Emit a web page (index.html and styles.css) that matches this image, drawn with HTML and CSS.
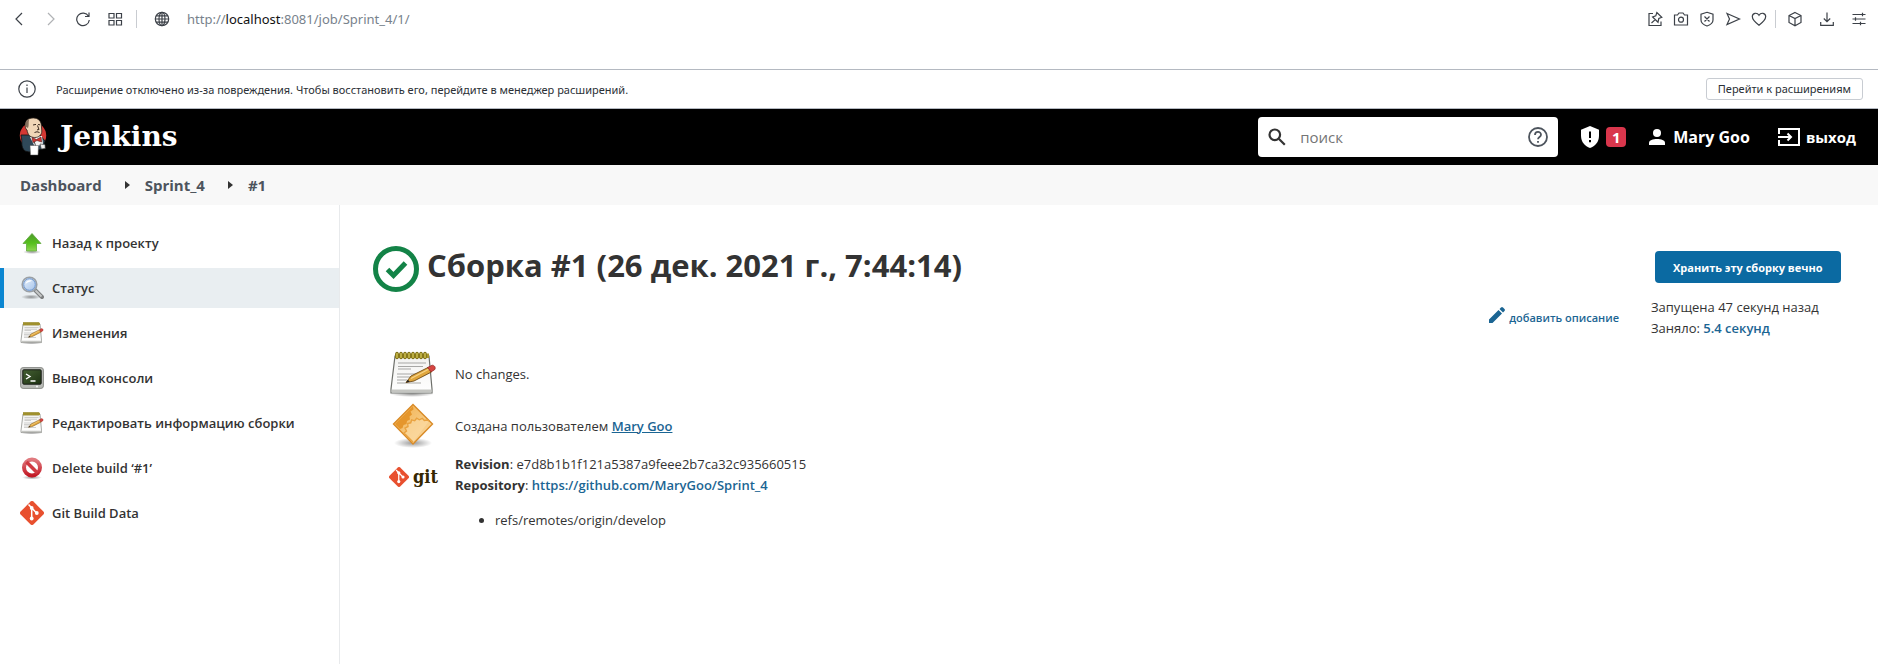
FILE: index.html
```html
<!DOCTYPE html>
<html lang="ru">
<head>
<meta charset="utf-8">
<title>Sprint_4 #1 [Jenkins]</title>
<link rel="stylesheet" href="styles.css">
</head>
<body>
<svg class="defs" width="0" height="0" aria-hidden="true">
  <defs>
    <linearGradient id="gGreen" x1="0" y1="0" x2="0" y2="1"><stop offset="0" stop-color="#4e9a2e"/><stop offset=".55" stop-color="#56c01c"/><stop offset="1" stop-color="#8ed652"/></linearGradient>
    <linearGradient id="gPaper" x1="0" y1="0" x2="0" y2="1"><stop offset="0" stop-color="#f2f2f0"/><stop offset="1" stop-color="#ffffff"/></linearGradient>
    <linearGradient id="gLens" x1="0" y1="0" x2="1" y2="1"><stop offset="0" stop-color="#e8f1fb"/><stop offset="1" stop-color="#a3c2ea"/></linearGradient>
    <linearGradient id="gScreen" x1="0" y1="0" x2="1" y2="1"><stop offset="0" stop-color="#456033"/><stop offset="1" stop-color="#1d3212"/></linearGradient>
    <linearGradient id="gStop" x1="0" y1="0" x2="0" y2="1"><stop offset="0" stop-color="#e07a7f"/><stop offset="1" stop-color="#c31a26"/></linearGradient>
    <linearGradient id="gOrange" x1="0" y1="0" x2="1" y2="1"><stop offset="0" stop-color="#f0ae4a"/><stop offset="1" stop-color="#fbdca6"/></linearGradient>
    <radialGradient id="gShadow"><stop offset="0" stop-color="#000" stop-opacity=".4"/><stop offset="1" stop-color="#000" stop-opacity="0"/></radialGradient>
    <symbol id="notepad" viewBox="0 0 48 48">
      <ellipse cx="23" cy="44" rx="22" ry="3" fill="url(#gShadow)"/>
      <path d="M6 6h34l3 33v4H2v-4z" fill="url(#gPaper)" stroke="#6d6f6a" stroke-width="1.2"/>
      <path d="M2.6 39.5h40v3h-40z" fill="#c4c5c1"/>
      <path d="M6 3.500h34v4.500h-34z" fill="#a9962a"/>
      <path d="M8 3.500v4M12 3.500v4M16 3.500v4M20 3.500v4M24 3.500v4M28 3.500v4M32 3.500v4M36 3.500v4" stroke="#7a6c14" stroke-width="3.400" stroke-linecap="round"/>
      <path d="M8 3.500v4M12 3.500v4M16 3.500v4M20 3.500v4M24 3.500v4M28 3.500v4M32 3.500v4M36 3.500v4" stroke="#d8c956" stroke-width="1.400" stroke-linecap="round"/>
      <path d="M9 13h28M9 16.500h25M9 19h13M8 24h24M8 27h16M8 30h10M8 33h24" stroke="#a7a7a5" stroke-width="1"/>
      <path d="M17 32.500l5-6.500 17-8.500 3.500 4.500L25 31z" fill="#e0a63c" stroke="#6d4a14" stroke-width=".9"/>
      <path d="M22 28.500l18-9.500" stroke="#f5d489" stroke-width="1.300"/>
      <path d="M17 32.500l2-2.700 1.700 2z" fill="#222"/>
      <path d="M38.500 17.500l4.500-2.300c2.500-.3 4.300 2.800 2.500 4.600l-3.500 2.200z" fill="#d64541" stroke="#8e2320" stroke-width=".7"/>
    </symbol>
    <symbol id="gitmark" viewBox="0 0 24 24">
      <path d="M10.600.6a2 2 0 0 1 2.800 0l10 10a2 2 0 0 1 0 2.800l-10 10a2 2 0 0 1-2.800 0l-10-10a2 2 0 0 1 0-2.800z" fill="#e8502f"/>
      <path d="M8.500 3.600l3.200 3.300v10.600M12 7.200l4.800 5" stroke="#fff" stroke-width="1.500" fill="none"/>
      <circle cx="11.700" cy="7" r="1.900" fill="#fff"/><circle cx="11.700" cy="17.500" r="1.900" fill="#fff"/><circle cx="16.800" cy="12" r="1.900" fill="#fff"/>
    </symbol>
  </defs>
</svg>

<div class="browser">
  <button class="tool" aria-label="Назад"><svg class="i16" viewBox="0 0 16 16"><path d="M11 2L5 8l6 6"/></svg></button>
  <button class="tool tool-off" aria-label="Вперёд"><svg class="i16" viewBox="0 0 16 16"><path d="M5 2l6 6-6 6"/></svg></button>
  <button class="tool" aria-label="Обновить"><svg class="i16" viewBox="0 0 16 16"><path d="M13.500 5.200A6.300 6.300 0 1 0 14.300 9M14 1.500v4h-4"/></svg></button>
  <button class="tool" aria-label="Экспресс-панель"><svg class="i16" viewBox="0 0 16 16"><path d="M2 2.500h5v4.500H2zM9.500 2.500h5v4.500h-5zM2 9.500h5V14H2zM9.500 9.500h5V14h-5z"/></svg></button>
  <span class="divider"></span>
  <svg class="i16 globe" viewBox="0 0 16 16"><circle cx="8" cy="8" r="6.700"/><ellipse cx="8" cy="8" rx="3" ry="6.700"/><path d="M8 1.300v13.400M1.300 8h13.400M2.200 4.800h11.600M2.200 11.200h11.600"/></svg>
  <span class="url">http://<b>localhost</b>:8081/job/Sprint_4/1/</span>
  <div class="browser-actions">
    <button class="act" aria-label="Закрепить"><svg class="i16" viewBox="0 0 16 16"><path d="M6 2.500H2v12h12V10.500M9.800 1.500l5 4.700-3 1.300-.8 3.700-5.400-5.200 3.200-1.200zM8.200 8.600L4.500 12"/></svg></button>
    <button class="act" aria-label="Снимок"><svg class="i16" viewBox="0 0 16 16"><path d="M1.500 4h3L6 2h4l1.500 2h3v10h-13z"/><circle cx="8" cy="8.700" r="2.500"/></svg></button>
    <button class="act" aria-label="Блокировка"><svg class="i16" viewBox="0 0 16 16"><path d="M8 1.300l6 2V9c0 3-3 5-6 6-3-1-6-3-6-6V3.300zM5.500 5.500l5 5M10.500 5.500l-5 5"/></svg></button>
    <button class="act" aria-label="Отправить"><svg class="i16" viewBox="0 0 16 16"><path d="M2 2.500L14.500 8 2 13.500 4.500 8z"/></svg></button>
    <button class="act" aria-label="Избранное"><svg class="i16" viewBox="0 0 16 16"><path d="M8 14.300C3 10.500 1.300 8 1.300 5.600 1.300 2 6 1 8 4.300 10 1 14.700 2 14.700 5.600c0 2.400-1.700 4.900-6.700 8.700z"/></svg></button>
    <span class="divider"></span>
    <button class="tool" aria-label="Расширения"><svg class="i16" viewBox="0 0 16 16"><path d="M8 1.500l6 3v7l-6 3.200-6-3.200v-7zM2 4.500l6 3 6-3M8 7.500v7"/></svg></button>
    <button class="tool" aria-label="Загрузки"><svg class="i16" viewBox="0 0 16 16"><path d="M8 1.500v9M4.800 7.500L8 10.700l3.200-3.200M1.700 11v3.300h12.600V11"/></svg></button>
    <button class="tool" aria-label="Настройки"><svg class="i16" viewBox="0 0 16 16"><path d="M1.500 3.500h13M1.500 8h13M1.500 12.500h13M11.500 1.800v3.400M4.500 6.300v3.400M9.500 10.800v3.400"/></svg></button>
  </div>
</div>

<div class="infobar">
  <svg class="info-icon" viewBox="0 0 18 18"><circle cx="9" cy="9" r="8.200"/><path d="M9 7.500V13M9 4.500V6"/></svg>
  <span>Расширение отключено из-за повреждения. Чтобы восстановить его, перейдите в менеджер расширений.</span>
  <button class="info-button">Перейти к расширениям</button>
</div>

<header class="header">
  <a class="brand" href="#">
    <svg class="butler" viewBox="0 0 28 40">
      <circle cx="14" cy="18.500" r="13.200" fill="#d33833"/>
      <path d="M2 18c2 8-1 11 4 16l4 1 14-3 2-8-5-6z" fill="#2f4858" stroke="#111" stroke-width=".8"/>
      <path d="M11 20l12-1 1 8-8 3z" fill="#f4f4f4"/>
      <path d="M15 24l4 12" stroke="#222" stroke-width=".8"/>
      <path d="M6.500 7C6.500 3 10 1 14.500 1s7.500 3 7.800 7l.5 6c0 4-3 6.500-7 6.500-5 0-7-3-7.800-7.500-1.600-1-2-3-1.500-6z" fill="#f0d6b7" stroke="#2a2019" stroke-width=".8"/>
      <path d="M6.500 6C8 3 9 2.500 10 3c-.7 3 .2 5-1 8-3-1-3-3-2.500-5z" fill="#86705d"/>
      <path d="M14 8l3-.6M19 7.500l2 .3M18.500 8.500l1.500 4-2 .4M15.500 15.500q2.500-1.500 5 0" stroke="#3a2a20" stroke-width="1" fill="none"/>
      <path d="M13 20.500l4.500 2 4.500-2.500.6 5-4.600-1.500L14 25.500z" fill="#d33833" stroke="#531512" stroke-width=".6"/>
      <path d="M11 28.500l8.500 0-.5 9.500h-7.500z" fill="#fff" stroke="#555" stroke-width=".5"/>
      <path d="M21 27l5 .5.300 4-4 .5z" fill="#eee" stroke="#333" stroke-width=".6"/>
    </svg>
    <span class="wordmark">Jenkins</span>
  </a>
  <form class="search" role="search">
    <svg class="search-icon" viewBox="0 0 18 18"><circle cx="6.800" cy="6.800" r="5.300"/><path d="M10.800 10.800l6 6"/></svg>
    <input type="search" class="search-input" placeholder="поиск" aria-label="поиск">
    <button type="button" class="help" aria-label="Справка"><svg viewBox="0 0 20 20"><circle cx="10" cy="10" r="9"/><path d="M7 8c0-4 6-4 6-.3 0 2.200-3 2.300-3 4.500M10 14v1.700"/></svg></button>
  </form>
  <a class="alerts" href="#"><svg class="shield" viewBox="0 0 18 22"><path d="M9 0l9 3.800v6C18 16 14 20.500 9 22 4 20.500 0 16 0 9.800v-6z" fill="#fff"/><path d="M9 5.500v6.500M9 14v2.300" stroke="#000" stroke-width="2"/></svg><span class="badge">1</span></a>
  <a class="user" href="#"><svg class="person" viewBox="0 0 16 16"><circle cx="8" cy="4" r="4" fill="#fff"/><path d="M0 16v-2c0-3 4-4 8-4s8 1 8 4v2z" fill="#fff"/></svg>Mary Goo</a>
  <a class="logout" href="#"><svg class="exit" viewBox="0 0 22 18"><path d="M1 6V1h20v16H1v-5M0 9h13M9.500 5.500L13 9l-3.500 3.500" fill="none" stroke="#fff" stroke-width="2"/></svg>выход</a>
</header>

<nav class="crumbs" aria-label="Навигация">
  <a href="#">Dashboard</a><i class="arrow"></i><a href="#">Sprint_4</a><i class="arrow"></i><a href="#">#1</a>
</nav>

<div class="page">
  <nav class="side">
    <a class="task" href="#"><svg class="i24" viewBox="0 0 24 24"><ellipse cx="12" cy="21" rx="9" ry="2" fill="url(#gShadow)"/><path d="M12 2.500l9 10h-4.500V20h-10v-7.500H3z" fill="url(#gGreen)" stroke="#5fa83e" stroke-width=".8"/></svg>Назад к проекту</a>
    <a class="task task-active" href="#"><svg class="i24" viewBox="0 0 24 24"><ellipse cx="11" cy="21" rx="10" ry="2.500" fill="url(#gShadow)"/><path d="M15 14l7 7" stroke="#7d7f80" stroke-width="4" stroke-linecap="round"/><path d="M15.500 14.500l6 6" stroke="#c6c8c8" stroke-width="1.800"/><circle cx="9.500" cy="8.500" r="7.300" fill="url(#gLens)" stroke="#9aa0a6" stroke-width="1.600"/><circle cx="9.500" cy="8.500" r="5.800" fill="none" stroke="#6f97cf" stroke-width="1"/><path d="M5.500 8c.5-3 3.500-4.500 6.500-3.200-2 1-4 1.500-6.500 3.200z" fill="#fff"/></svg>Статус</a>
    <a class="task" href="#"><svg class="i24"><use href="#notepad"/></svg>Изменения</a>
    <a class="task" href="#"><svg class="i24" viewBox="0 0 24 24"><rect x=".6" y="1.600" width="22.800" height="20.800" rx="2.500" fill="#b9bbb7" stroke="#8b8d89"/><rect x="2.800" y="3.800" width="18.400" height="14.400" rx="1" fill="url(#gScreen)" stroke="#1a1c18"/><path d="M6 8l4 2.500L6 13M10.500 15h5" fill="none" stroke="#fff" stroke-width="1.400"/><circle cx="17" cy="20.500" r=".9" fill="#fff"/></svg>Вывод консоли</a>
    <a class="task" href="#"><svg class="i24"><use href="#notepad"/></svg>Редактировать информацию сборки</a>
    <a class="task" href="#"><svg class="i24" viewBox="0 0 24 24"><ellipse cx="12" cy="21.500" rx="10" ry="2" fill="url(#gShadow)"/><circle cx="12" cy="11.500" r="8" fill="#fff" stroke="url(#gStop)" stroke-width="4"/><path d="M6.500 6l11 11" stroke="#cf3a42" stroke-width="3.600"/></svg>Delete build ‘#1’</a>
    <a class="task" href="#"><svg class="i24"><use href="#gitmark"/></svg>Git Build Data</a>
  </nav>

  <main class="main">
    <div class="content">
      <h1 class="title"><svg class="status" viewBox="0 0 48 48"><circle cx="24" cy="24" r="20.500" fill="none" stroke="#138347" stroke-width="5"/><path d="M15.500 24.500l6 6 12-12.500" fill="none" stroke="#138347" stroke-width="5"/></svg>Сборка #1 (26 дек. 2021 г., 7:44:14)</h1>
      <div class="describe"><a class="edit" href="#"><svg class="pencil" viewBox="0 0 16 16"><path d="M0 12.500L9.500 3 13 6.500 3.500 16H0zM10.500 2L12 .5a1.500 1.500 0 0 1 2 0L15.500 2a1.500 1.500 0 0 1 0 2L14 5.500z" fill="#1b6593"/></svg>добавить описание</a></div>
      <section class="row">
        <svg class="i48"><use href="#notepad"/></svg>
        <p>No changes.</p>
      </section>
      <section class="row">
        <svg class="i48" viewBox="0 0 48 48"><ellipse cx="24" cy="41" rx="19" ry="5" fill="url(#gShadow)"/><path d="M24 2.500L43.500 22 24 42 4.500 22z" fill="url(#gOrange)" stroke="#d98a26" stroke-width="1.400"/><path d="M24 4l-18 18 5 5 2.500-1 1-3 3-1 .5-3 3-1.500-.5-3 2.500-2-1.500-3 3-2z" fill="#e5962c"/><path d="M24 40L15 31l2.500-2-1.500-3 3-1.500-.3-3 3-.7 1-3 3 1 2-2.600 2.600 1.600 3-1.500 2 2.200 3-.5 2 1" fill="#fbdca6" fill-opacity=".6" stroke="#e9a23f" stroke-width="1.400"/></svg>
        <p>Создана пользователем <a class="author" href="#">Mary Goo</a></p>
      </section>
      <section class="row row-git">
        <div class="gitlogo"><svg class="gitlogo-mark"><use href="#gitmark"/></svg>git</div>
        <div>
          <p><b>Revision</b>: e7d8b1b1f121a5387a9feee2b7ca32c935660515</p>
          <p><b>Repository</b>: <a href="#">https://github.com/MaryGoo/Sprint_4</a></p>
          <ul class="refs"><li>refs/remotes/origin/develop</li></ul>
        </div>
      </section>
    </div>
    <aside class="summary">
      <button class="keep">Хранить эту сборку вечно</button>
      <p>Запущена 47 секунд назад</p>
      <p>Заняло: <a href="#">5.4 секунд</a></p>
    </aside>
  </main>
</div>
</body>
</html>
```
FILE: styles.css
```css
* { box-sizing: border-box; }
html, body { height: 100%; }
body {
  margin: 0;
  display: flex;
  flex-direction: column;
  background: #fff;
  color: #333;
  font: 13px/21px "Open Sans", "Noto Sans", sans-serif;
}
p { margin: 0; }
button, input { font: inherit; }
a { color: #1b6593; text-decoration: none; font-weight: 600; }
svg { flex: none; display: block; }
.defs { position: absolute; }
.i16 { width: 16px; height: 16px; fill: none; stroke: #3c4148; stroke-width: 1.2; }
.i24 { width: 24px; height: 24px; }
.i48 { width: 48px; height: 48px; }

.browser {
  height: 70px;
  padding: 3px 3px 34px;
  border-bottom: 1px solid #b4b9c1;
  display: flex;
  align-items: center;
}
.browser, .infobar { font-family: "Noto Sans", "Open Sans", sans-serif; }
.tool, .act {
  width: 32px;
  height: 32px;
  padding: 0;
  border: 0;
  background: none;
  display: grid;
  place-items: center;
}
.act { width: 26px; }
.tool-off { opacity: .4; }
.divider { width: 1px; height: 18px; background: #c9ccd1; margin: 0 5px; }
.globe { margin: 0 17px 0 12px; }
.url { color: #78828c; }
.url b { color: #111; font-weight: 400; }
.browser-actions { margin-left: auto; display: flex; align-items: center; }
.browser-actions .divider { margin: 0 3px; }

.infobar {
  height: 39px;
  padding: 0 15px 0 18px;
  border-bottom: 1px solid #b4b9c1;
  display: flex;
  align-items: center;
  gap: 20px;
  color: #2b2f35;
  font-size: 11px;
}
.info-icon { width: 18px; height: 18px; fill: none; stroke: #3c4148; stroke-width: 1.2; }
.info-button {
  margin-left: auto;
  height: 22px;
  padding: 0 11px;
  border: 1px solid #c8ccd2;
  border-radius: 3px;
  background: #fff;
  color: inherit;
  line-height: 18px;
}

.header {
  height: 56px;
  padding: 0 22px 0 19px;
  background: #000;
  display: flex;
  align-items: center;
  font-size: 15px;
}
.header a { color: #fff; font-weight: 700; display: flex; align-items: center; }
.brand { gap: 13px; margin-right: auto; }
.butler { width: 28px; height: 40px; }
.header .wordmark { font: 700 28px/40px "DejaVu Serif", serif; }
.search {
  width: 300px;
  height: 40px;
  padding: 0 10px;
  border-radius: 4px;
  background: #fff;
  display: flex;
  align-items: center;
  gap: 14px;
}
.search-icon { width: 18px; height: 18px; fill: none; stroke: #333; stroke-width: 2.2; }
.search-input { flex: 1; min-width: 0; padding: 0; border: 0; outline: 0; background: none; color: #333; }
.search-input::placeholder { color: #757575; }
.help { width: 20px; height: 20px; padding: 0; border: 0; background: none; }
.help svg { width: 20px; height: 20px; fill: none; stroke: #4d545d; stroke-width: 1.8; }
.alerts { gap: 7px; margin-left: 23px; }
.shield { width: 18px; height: 22px; }
.badge { width: 20px; height: 20px; border-radius: 4px; background: #d9364c; text-align: center; line-height: 20px; }
.header .user { gap: 8px; margin-left: 23px; font-size: 16px; }
.person { width: 16px; height: 16px; }
.logout { gap: 6px; margin-left: 28px; }
.exit { width: 22px; height: 18px; }

.crumbs {
  height: 40px;
  padding: 0 20px;
  background: #f8f8f8;
  display: flex;
  align-items: center;
  font-size: 15px;
}
.crumbs a { color: #4d545d; font-weight: 700; }
.arrow { margin: 0 15px 0 23px; border: 4px solid transparent; border-left: 5px solid #333; border-right: 0; }

.page { flex: 1; display: grid; grid-template-columns: 340px 1fr; }
.side {
  padding-top: 18px;
  border-right: 1px solid #e8eaec;
  display: flex;
  flex-direction: column;
  gap: 5px;
}
.task {
  height: 40px;
  padding-left: 20px;
  display: flex;
  align-items: center;
  gap: 8px;
  color: #333;
}
.task-active { padding-left: 16px; border-left: 4px solid #0b86d1; background: #e9eef1; }

.main { padding: 40px 32px 0; display: flex; }
.content { flex: 1; }
.title {
  margin: 0;
  display: flex;
  align-items: flex-start;
  gap: 7px;
  font-size: 31px;
  line-height: 40px;
}
.status { width: 48px; height: 48px; }
.describe { height: 55px; padding-top: 14px; display: flex; justify-content: flex-end; font-size: 11px; }
.edit { display: flex; gap: 4px; }
.pencil { width: 16px; height: 16px; }
.row { padding: 2px 0 2px 17px; display: flex; align-items: center; gap: 18px; }
.row-git { align-items: flex-start; }
.author { text-decoration: underline; }
.gitlogo { width: 48px; padding-top: 12px; display: flex; align-items: center; gap: 4px; color: #362701; font: 700 18px/22px "DejaVu Serif Condensed", "DejaVu Serif", serif; }
.gitlogo-mark { width: 20px; height: 20px; }
.refs { margin: 14px 0; padding-left: 40px; }
.summary { flex: none; width: 195px; margin-left: 32px; padding-top: 6px; }
.keep {
  height: 32px;
  margin: 0 0 14px 4px;
  padding: 0 18px;
  border: 0;
  border-radius: 4px;
  background: #0b6aa2;
  color: #fff;
  font-size: 11px;
  font-weight: 700;
  white-space: nowrap;
}
```
